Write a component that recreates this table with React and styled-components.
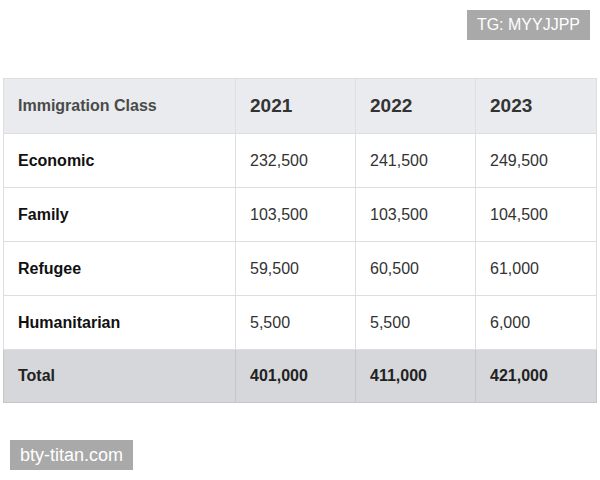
import React from 'react';
import styled, { createGlobalStyle } from 'styled-components';

const rows = [
  ['Economic', '232,500', '241,500', '249,500'],
  ['Family', '103,500', '103,500', '104,500'],
  ['Refugee', '59,500', '60,500', '61,000'],
  ['Humanitarian', '5,500', '5,500', '6,000'],
];

const total = ['Total', '401,000', '411,000', '421,000'];

const App = () => {
  return (
    <Page>
      <GlobalStyle />
      <Watermark $top="10px" $right="10px">TG: MYYJJPP</Watermark>
      <Table>
        <colgroup>
          <col style={{ width: 232 }} />
          <col style={{ width: 120 }} />
          <col style={{ width: 120 }} />
          <col />
        </colgroup>
        <thead>
          <tr>
            <HeadCell>Immigration Class</HeadCell>
            <HeadCell $year>2021</HeadCell>
            <HeadCell $year>2022</HeadCell>
            <HeadCell $year>2023</HeadCell>
          </tr>
        </thead>
        <tbody>
          {rows.map((row) => (
            <tr key={row[0]}>
              <LabelCell>{row[0]}</LabelCell>
              <Cell>{row[1]}</Cell>
              <Cell>{row[2]}</Cell>
              <Cell>{row[3]}</Cell>
            </tr>
          ))}
          <TotalRow>
            {total.map((v) => (
              <TotalCell key={v}>{v}</TotalCell>
            ))}
          </TotalRow>
        </tbody>
      </Table>
      <Footer>
        <Tag>bty-titan.com</Tag>
      </Footer>
    </Page>
  );
};

const GlobalStyle = createGlobalStyle`
  body {
    margin: 0;
    background: #fff;
    font-family: "Liberation Sans", Arial, sans-serif;
  }
`;

const Page = styled.div`
  position: relative;
  width: 600px;
  height: 480px;
  padding: 78px 3px 0;
  box-sizing: border-box;
`;

const Watermark = styled.div`
  position: absolute;
  top: ${(p) => p.$top};
  right: ${(p) => p.$right};
  background: #a9a9a9;
  color: #fff;
  font-size: 16px;
  padding: 0 10px;
  height: 30px;
  line-height: 30px;
`;

const Table = styled.table`
  width: 594px;
  border-collapse: collapse;
  table-layout: fixed;
  border: 1px solid #dcdee1;
  font-size: 16px;
  color: #222;
`;

const HeadCell = styled.th`
  background: #e9ebee;
  height: 54px;
  padding: 0 14px;
  text-align: left;
  font-weight: bold;
  font-size: ${(p) => (p.$year ? '19px' : '16px')};
  color: ${(p) => (p.$year ? '#333' : '#4a4a4a')};
  border: 1px solid #dcdee1;
`;

const Cell = styled.td`
  height: 53px;
  padding: 0 14px;
  border: 1px solid #dcdee1;
  color: #333;
`;

const LabelCell = styled(Cell)`
  font-weight: bold;
  color: #111;
`;

const TotalRow = styled.tr`
  background: #d5d7da;
  border-bottom: 1px solid #b5b7ba;
`;

const TotalCell = styled(Cell)`
  height: 52px;
  font-weight: bold;
  color: #222;
  border-color: #c4c6c9;
`;

const Footer = styled.div`
  padding: 37px 0 0 7px;
`;

const Tag = styled.span`
  display: inline-block;
  background: #a9a9a9;
  color: #fff;
  font-size: 18px;
  height: 30px;
  line-height: 30px;
  padding: 0 10px;
`;

export default App;
